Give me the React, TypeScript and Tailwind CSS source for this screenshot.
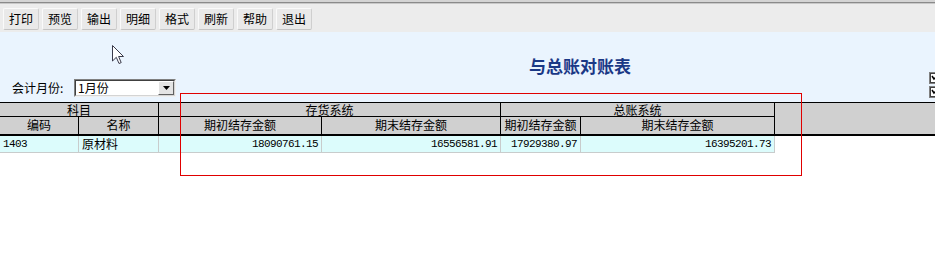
import React from 'react';

const tools = ['打印', '预览', '输出', '明细', '格式', '刷新', '帮助', '退出'];

const cols = [
  { label: '编码', w: 'w-[79px]' },
  { label: '名称', w: 'w-[80px]' },
  { label: '期初结存金额', w: 'w-[163px]' },
  { label: '期末结存金额', w: 'w-[179px]' },
  { label: '期初结存金额', w: 'w-[80px]' },
  { label: '期末结存金额', w: 'w-[194px]' },
];

const row = ['1403', '原材料', '18090761.15', '16556581.91', '17929380.97', '16395201.73'];

function CheckBox() {
  return (
    <svg width="12" height="12" viewBox="0 0 12 12" className="block">
      <rect x="0.5" y="0.5" width="11" height="11" fill="#fff" stroke="#808080" />
      <rect x="1.5" y="1.5" width="9" height="9" fill="none" stroke="#404040" />
      <path d="M3 4 L5 7 L9 3" fill="none" stroke="#000" strokeWidth="1.5" />
    </svg>
  );
}

export default function App() {
  return (
    <div
      className="relative w-[935px] h-[278px] overflow-hidden bg-white text-black text-[12px]"
      style={{ fontFamily: '"Noto Sans CJK SC", "Liberation Sans", sans-serif' }}
    >
      {/* top edge */}
      <div className="h-[2px] bg-[#d4d4d4]" />
      <div className="h-px bg-[#8a8a8a]" />
      <div className="h-px bg-[#c8c8c8]" />

      {/* toolbar */}
      <div className="h-[28px] bg-[#ececec] flex items-start pt-[4px] pl-[3px] gap-[3px]">
        {tools.map((t) => (
          <div
            key={t}
            className="w-[36px] h-[22px] flex items-center justify-center bg-[#e9e9e9] border border-t-[#fafafa] border-l-[#fafafa] border-r-[#cfcfcf] border-b-[#c4c4c4] rounded-[2px] leading-none"
          >
            {t}
          </div>
        ))}
      </div>

      {/* blue header area */}
      <div className="h-[70px] bg-[#eaf4fe] flex">
        <div className="flex-1 flex flex-col">
          <div className="pt-[22px] h-[46px] pl-[529px] text-[17px] leading-[24px] font-bold text-[#1a3886]">
            与总账对账表
          </div>
          <div className="flex items-center h-[18px] mt-[1px]">
            <span className="pl-[12px] w-[74px] leading-none">会计月份:</span>
            <div className="w-[102px] h-[18px] flex border border-t-[#808080] border-l-[#808080] border-r-[#f0f0f0] border-b-[#f0f0f0]">
              <div className="flex-1 flex bg-white border border-t-[#404040] border-l-[#404040] border-r-[#d4d4d4] border-b-[#d4d4d4]">
                <span className="flex-1 pl-[2px] leading-[14px]">1月份</span>
                <div className="w-[16px] h-[14px] bg-[#e4e4e4] flex items-center justify-center border border-t-[#fff] border-l-[#fff] border-r-[#606060] border-b-[#606060]">
                  <svg width="7" height="4" viewBox="0 0 7 4">
                    <path d="M0 0 H7 L3.5 4 Z" fill="#000" />
                  </svg>
                </div>
              </div>
            </div>
          </div>
        </div>
        <div className="w-[6px] overflow-hidden pt-[40px] flex flex-col gap-[2px]">
          <CheckBox />
          <CheckBox />
        </div>
      </div>

      {/* table header */}
      <div className="bg-[#d0d0d0] border-t border-b-2 border-black flex">
        <div className="flex flex-col">
          <div className="flex h-[14px] border-b border-black leading-[13px]">
            <div className="w-[159px] text-center border-r border-black">科目</div>
            <div className="w-[342px] text-center border-r border-black">存货系统</div>
            <div className="w-[274px] text-center border-r border-black">总账系统</div>
          </div>
          <div className="flex h-[17px] leading-[16px]">
            {cols.map((c, i) => (
              <div key={i} className={`${c.w} text-center border-r border-black whitespace-nowrap overflow-hidden`}>
                {c.label}
              </div>
            ))}
          </div>
        </div>
        <div className="flex-1" />
      </div>

      {/* data row */}
      <div className="flex h-[17px] w-[775px] bg-[#dcfcfc] border-b border-[#c8cccc]">
        {row.map((v, i) => (
          <div
            key={i}
            className={`${cols[i].w} border-r border-[#c8cccc] leading-[16px] ${
              i === 1 ? 'pl-[3px]' : i === 0 ? 'pl-[3px] text-left' : 'pr-[3px] text-right'
            }`}
            style={i === 1 ? undefined : { fontFamily: '"Liberation Mono", monospace' }}
          >
            <span className={i === 1 ? '' : 'text-[11px] tracking-[-0.6px]'}>{v}</span>
          </div>
        ))}
      </div>

      {/* red selection rectangle */}
      <div className="absolute left-[180px] top-[93px] w-[622px] h-[83px] border border-[#e00000] pointer-events-none" />

      {/* mouse cursor */}
      <svg className="absolute left-[112px] top-[45px]" width="13" height="20" viewBox="0 0 13 20">
        <path d="M0.5 0.5 L0.5 16 L4.3 12.3 L7 18.5 L9.2 17.6 L6.6 11.5 L11.5 11.5 Z" fill="#fff" stroke="#3a3a4a" strokeWidth="1" />
      </svg>
    </div>
  );
}
